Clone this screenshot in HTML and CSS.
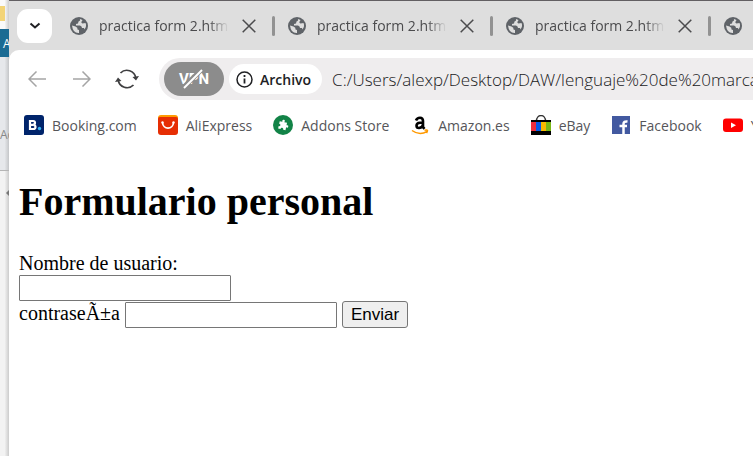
FILE: index.html
```
<!DOCTYPE html>
<html lang="es">
<head>
<meta charset="utf-8">
<title>practica form 2.html</title>
<link rel="stylesheet" href="styles.css">
</head>
<body>
<svg class="defs" aria-hidden="true">
  <symbol id="globe" viewBox="0 0 18 18">
    <circle cx="9" cy="9" r="9" fill="#5f6368"/>
    <path d="M2 8.500 5.500 9.500Q8 10.500 7.500 12.500L9 13V16Q3 16.500 2 8.500ZM10 2Q10.500 4 8.500 4.500L8 6.500 6 7V8.500H10Q12 9 12 11H14L14.500 12.500Q17 9 15.500 6L12.500 6.500Q10.500 5.500 12 4L12.500 3Z" fill="#dedede"/>
  </symbol>
  <symbol id="close" viewBox="0 0 14 14">
    <path d="M.7.7 13.300 13.300M13.300.7.7 13.300" fill="none" stroke="#4b4b4d" stroke-width="1.500"/>
  </symbol>
</svg>
<div class="desktop">
  <aside class="behind">
    <div class="behind-top"><i></i></div>
    <div class="behind-title">A</div>
    <div class="behind-panel">Ac</div>
    <div class="behind-bottom"><svg width="4" height="8" viewBox="0 0 4 8"><path d="M4 0 0 4 4 8Z" fill="#777"/></svg></div>
  </aside>
  <div class="window">
    <header class="tabs">
      <button class="tab-menu" aria-label="Pestañas"><svg width="12" height="8" viewBox="0 0 12 8"><path d="M1.500 1.500 6 5.500 10.500 1.500" fill="none" stroke="#202124" stroke-width="2"/></svg></button>
      <div class="tab"><svg class="globe"><use href="#globe"/></svg><span class="tab-title">practica form 2.html</span><button class="tab-close" aria-label="Cerrar"><svg><use href="#close"/></svg></button></div>
      <div class="tab"><svg class="globe"><use href="#globe"/></svg><span class="tab-title">practica form 2.html</span><button class="tab-close" aria-label="Cerrar"><svg><use href="#close"/></svg></button></div>
      <div class="tab"><svg class="globe"><use href="#globe"/></svg><span class="tab-title">practica form 2.html</span><button class="tab-close" aria-label="Cerrar"><svg><use href="#close"/></svg></button></div>
      <div class="tab"><svg class="globe"><use href="#globe"/></svg><span class="tab-title">practica form 2.html</span></div>
    </header>
    <div class="chrome">
      <div class="toolbar">
        <button class="nav" aria-label="Atrás"><svg width="18" height="16" viewBox="0 0 18 16"><path d="M18 8H1M8.500.5 1 8 8.500 15.500" fill="none" stroke="#a5a5a5" stroke-width="1.500"/></svg></button>
        <button class="nav" aria-label="Adelante"><svg width="18" height="16" viewBox="0 0 18 16"><path d="M0 8H17M9.500.5 17 8 9.500 15.500" fill="none" stroke="#a5a5a5" stroke-width="1.500"/></svg></button>
        <button class="nav" aria-label="Recargar"><svg width="24" height="20" viewBox="0 0 24 20"><path d="M5.500 4A9 9 0 0 1 20.800 9M18.500 16A9 9 0 0 1 3.200 11" fill="none" stroke="#3f3f41" stroke-width="1.700"/><path d="M17.500 8 24 7 21 11.500ZM6.500 12 0 13 3 8.500Z" fill="#3f3f41"/></svg></button>
        <div class="address">
          <button class="vpn"><span>VPN</span><svg viewBox="0 0 26 22"><path d="M3 19 20 2" stroke="#8c8c8c" stroke-width="5"/><path d="M3 20 21 2" stroke="#fff" stroke-width="2"/></svg></button>
          <button class="origin"><svg width="17" height="17" viewBox="0 0 17 17"><circle cx="8.500" cy="8.500" r="7.500" fill="none" stroke="#202124" stroke-width="1.500"/><path d="M8.500 7.500V12.500M8.500 4V6" stroke="#202124" stroke-width="1.800"/></svg>Archivo</button>
          <span class="url">C:/Users/alexp/Desktop/DAW/lenguaje%20de%20marcas</span>
        </div>
      </div>
      <nav class="bookmarks">
        <a href="#"><svg viewBox="0 0 20 20"><path d="M3 0H17Q20 0 20 3V17Q20 20 17 20H0V3Q0 0 3 0Z" fill="#00246b"/><path d="M6 6H9.200Q11 6 11 7.800 11 9.500 9.200 9.800 11.500 10 11.500 12 11.500 14 9.200 14H6ZM6 9.900H9" fill="none" stroke="#fff" stroke-width="2.200"/><circle cx="15.500" cy="13.500" r="1.700" fill="#37b4f5"/></svg>Booking.com</a>
        <a href="#"><svg viewBox="0 0 20 20"><rect width="20" height="14" rx="3" fill="#ff9a00"/><path d="M0 4Q0 2 2 2H18Q20 2 20 4V17Q20 20 17 20H3Q0 20 0 17Z" fill="#e62e04"/><path d="M4.500 7.500C5 15 15 15 15.500 7.500" fill="none" stroke="#fff" stroke-width="1.700"/><circle cx="4.500" cy="7.500" r="1.200" fill="#fff"/><circle cx="15.500" cy="7.500" r="1.200" fill="#fff"/></svg>AliExpress</a>
        <a href="#"><svg viewBox="0 0 20 20"><circle cx="10" cy="10" r="10" fill="#128347"/><path transform="rotate(12 10 10)" fill="#fff" d="M6 7H8.700Q7.800 4.800 9.700 4.800T10.700 7H13.500V9.500Q15.500 8.700 15.500 10.500T13.500 11.500V14.500H11.200Q11.200 12.800 9.800 12.800T8.400 14.500H6V12Q7.500 12 7.500 10.700T6 9.500Z"/></svg>Addons Store</a>
        <a href="#"><svg viewBox="0 0 20 20"><path d="M6 5.500Q7 2.700 10 2.700 13 2.700 13 6V13.500M13 7.800H10Q6.500 8 6.500 10.700 6.500 13 9 13 13 12.500 13 8.500M12.600 11.500 14.500 13.800" fill="none" stroke="#000" stroke-width="2.600"/><path d="M2 15.500Q9.500 21 17 16.500M14.500 15.200Q17.500 14.500 17.500 15.500T16.500 18" fill="none" stroke="#ff9900" stroke-width="1.500"/></svg>Amazon.es</a>
        <a href="#"><svg viewBox="0 0 20 20"><path d="M5.500 6C5.500-1.300 14.500-1.300 14.500 6" fill="none" stroke="#333" stroke-width="1.400"/><path d="M0 5H20V20H0Z" fill="#000"/><path d="M0 7H5V16H0Z" fill="#ee2d3c"/><path d="M5 7H10V16H5Z" fill="#075be8"/><path d="M10 7H15V16H10Z" fill="#f9b900"/><path d="M15 7H20V16H15Z" fill="#79b716"/></svg>eBay</a>
        <a href="#"><svg viewBox="0 0 20 20"><path d="M1 1H19V19H1Z" fill="#4259a0"/><path d="M12.500 19V9Q12.500 6 16.500 6.500M8.500 11H16" fill="none" stroke="#fff" stroke-width="2.500"/></svg>Facebook</a>
        <a href="#"><svg viewBox="0 0 20 20"><rect y="3.500" width="20" height="13.500" rx="3" fill="#f00"/><path d="M8 7.500 13 10.200 8 13Z" fill="#fff"/></svg>YouTube</a>
      </nav>
      <main class="page">
        <h1>Formulario personal</h1>
        <form>
          <label for="user">Nombre de usuario:</label><br>
          <input id="user" type="text"><br>
          <label for="pass">contraseÃ±a</label>
          <input id="pass" type="password">
          <button type="button">Enviar</button>
        </form>
      </main>
    </div>
  </div>
</div>
</body>
</html>
```
FILE: styles.css
```
* { box-sizing: border-box; }
body {
  margin: 0;
  overflow: hidden;
  font-family: "Open Sans", "Noto Sans", sans-serif;
}
button { border: 0; padding: 0; background: none; font: inherit; }
svg { display: block; flex: none; }
.defs { position: absolute; width: 0; height: 0; }

.desktop { display: flex; min-height: 100vh; }

/* Strip of the application behind the browser */
.behind {
  display: flex;
  flex-direction: column;
  flex: none;
  width: 9px;
  overflow: hidden;
  color: #888;
  font-size: 12px;
  background: linear-gradient(90deg, #f3f3f3 50%, #cccccc);
}
.behind-top { height: 29px; padding-top: 6px; background: linear-gradient(90deg, #fafafa 50%, #cccccc); }
.behind-top i { display: block; width: 5px; height: 15px; background: #f3d477; }
.behind-title { height: 28px; padding-left: 3px; line-height: 29px; color: #fff; background: #1b6b93; }
.behind-panel {
  height: 114px;
  padding-top: 69px;
  line-height: 18px;
  border-bottom: 1px solid #b5b5b5;
  background: linear-gradient(90deg, #e6e8eb 50%, #c4c6c8);
}
.behind-bottom { padding: 18px 0 0 6px; }

.window {
  flex: 1;
  min-width: 0;
  display: flex;
  flex-direction: column;
  border-top: 1px solid #625f62;
  background: #dedede;
}

.tabs { display: flex; align-items: center; height: 49px; padding-left: 8px; overflow: hidden; }
.tab-menu {
  display: grid;
  place-items: center;
  flex: none;
  width: 35px;
  height: 34px;
  margin-right: 18px;
  border-radius: 11px;
  background: #fff;
}
.tab { display: flex; align-items: center; flex: none; }
.tab + .tab::before {
  content: "";
  width: 3px;
  height: 20px;
  margin: 0 13px 0 16px;
  border-radius: 2px;
  background: #929292;
}
.globe { width: 18px; height: 18px; margin-right: 11px; }
.tab-title {
  width: 130px;
  overflow: hidden;
  white-space: nowrap;
  font-size: 14px;
  color: #4b4b4d;
  mask-image: linear-gradient(90deg, #000 84%, transparent);
}
.tab-close { margin-left: 13px; }
.tab-close svg { width: 14px; height: 14px; }

.chrome { flex: 1; border-radius: 10px 0 0 0; background: #fff; }
.toolbar { display: flex; align-items: center; padding: 8px 0 0 5px; }
.nav { display: grid; place-items: center; flex: none; width: 45px; height: 42px; }
.address {
  display: flex;
  align-items: center;
  flex: 1;
  min-width: 0;
  height: 42px;
  margin-left: 10px;
  padding-left: 5px;
  overflow: hidden;
  border-radius: 21px 0 0 21px;
  background: #efedee;
}
.vpn {
  display: grid;
  place-items: center;
  place-content: center;
  flex: none;
  width: 60px;
  height: 34px;
  border-radius: 17px;
  color: #fff;
  font: bold 15px Roboto, sans-serif;
  background: #8c8c8c;
}
.vpn > * { grid-area: 1 / 1; }
.vpn > svg { width: 26px; height: 22px; }
.origin {
  display: flex;
  align-items: center;
  flex: none;
  gap: 7px;
  height: 30px;
  margin-left: 5px;
  padding: 0 11px 0 7px;
  border-radius: 15px;
  color: #202124;
  font-size: 14px;
  font-weight: 600;
  background: #fff;
}
.url { margin-left: 10px; white-space: nowrap; font-size: 17px; font-weight: 350; color: #202022; }

.bookmarks { display: flex; align-items: center; gap: 21px; height: 50px; padding-left: 15px; overflow: hidden; }
.bookmarks a {
  display: flex;
  align-items: center;
  flex: none;
  gap: 8px;
  color: #56565a;
  font-size: 14px;
  text-decoration: none;
}
.bookmarks svg { width: 20px; height: 20px; }

.page { padding: 29px 10px 10px; font: 20px/23px "Liberation Serif", serif; color: #000; }
h1 { margin: 0 0 27px; font-size: 40px; line-height: 46px; }
form { line-height: 23px; }
.page input {
  width: 212px;
  height: 26px;
  border: 1px solid #767676;
  border-radius: 1px;
  background: #fff;
  font: 17px "Liberation Sans", sans-serif;
}
.page button {
  height: 27px;
  padding: 0 8px;
  border: 1px solid #767676;
  border-radius: 3px;
  background: #efefef;
  font: 17px "Liberation Sans", sans-serif;
}
```
